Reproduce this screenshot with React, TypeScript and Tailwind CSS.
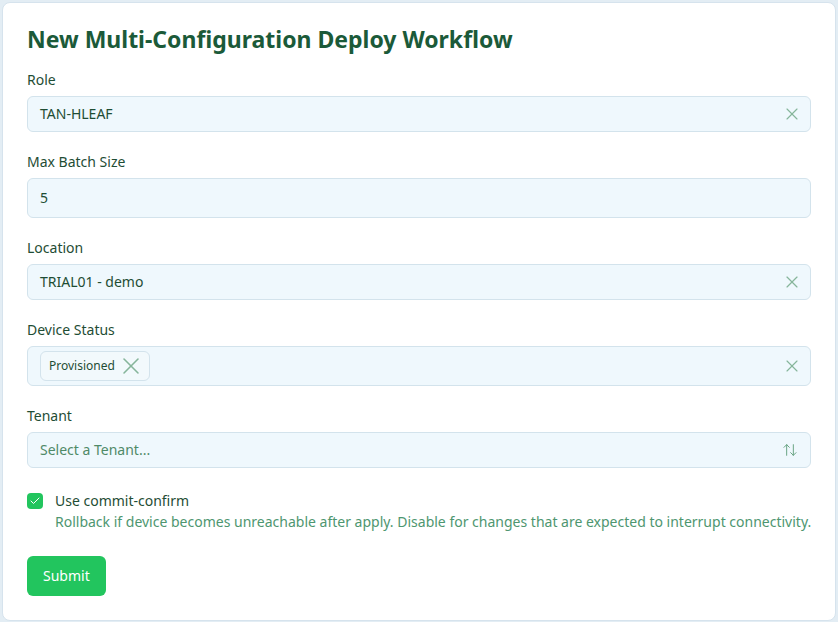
import { useState } from 'react';
import { X, ArrowUpDown, Check } from 'lucide-react';

const inputBox =
  'w-full flex items-center rounded-md border border-[#d3e3ec] bg-[#eff8fd] text-sm text-[#1e4d34]';

function Field({ label, children }: { label: string; children: React.ReactNode }) {
  return (
    <div>
      <label className="block text-sm leading-5 text-[#1f4d35] mb-1.5">{label}</label>
      {children}
    </div>
  );
}

function ClearIcon() {
  return <X size={20} strokeWidth={1.4} className="text-[#86b59b] shrink-0 -mr-1" />;
}

export default function App() {
  const [commitConfirm, setCommitConfirm] = useState(true);

  return (
    <div
      className="min-h-[622px] bg-[#e3edf4] p-[2px]"
      style={{ fontFamily: '"Noto Sans", "Open Sans", sans-serif' }}
    >
      <div className="bg-white rounded-lg border border-[#d6e3ed] px-6 pt-5 pb-6">
        <h1 className="text-[23px] leading-8 font-bold text-[#1b5a39] mb-[15px]">
          New Multi-Configuration Deploy Workflow
        </h1>

        <div className="flex flex-col gap-5">
          <Field label="Role">
            <div className={`${inputBox} h-9 px-3 justify-between`}>
              <span>TAN-HLEAF</span>
              <ClearIcon />
            </div>
          </Field>

          <Field label="Max Batch Size">
            <div className={`${inputBox} h-10 px-3`}>
              <span>5</span>
            </div>
          </Field>

          <Field label="Location">
            <div className={`${inputBox} h-9 px-3 justify-between`}>
              <span>TRIAL01 - demo</span>
              <ClearIcon />
            </div>
          </Field>

          <Field label="Device Status">
            <div className={`${inputBox} h-10 px-3 justify-between`}>
              <span className="inline-flex items-center gap-0.5 h-[30px] pl-2 pr-1 rounded-md border border-[#d3e3ec] bg-[#f2f9fc] text-xs text-[#1f4d35]">
                Provisioned
                <X size={28} strokeWidth={1.3} className="text-[#86b59b]" />
              </span>
              <ClearIcon />
            </div>
          </Field>

          <Field label="Tenant">
            <div className={`${inputBox} h-9 px-3 justify-between`}>
              <span className="text-[#4f8a68]">Select a Tenant...</span>
              <ArrowUpDown size={16} strokeWidth={1.5} className="text-[#6aa585] shrink-0" />
            </div>
          </Field>
        </div>

        <div className="mt-[23px] flex items-start gap-3">
          <button
            type="button"
            onClick={() => setCommitConfirm(v => !v)}
            className={`mt-0.5 h-4 w-4 shrink-0 rounded flex items-center justify-center ${
              commitConfirm ? 'bg-[#22c55e]' : 'bg-white border border-[#c5d6df]'
            }`}
          >
            {commitConfirm && <Check size={12} strokeWidth={2} className="text-white" />}
          </button>
          <div className="text-sm leading-5">
            <p className="text-[#1f4d35]">Use commit-confirm</p>
            <p className="text-[#4e9670] mt-px whitespace-nowrap">
              Rollback if device becomes unreachable after apply. Disable for changes that are expected to interrupt connectivity.
            </p>
          </div>
        </div>

        <button className="mt-6 h-10 px-4 rounded-md bg-[#22c55e] text-white text-sm">
          Submit
        </button>
      </div>
    </div>
  );
}
